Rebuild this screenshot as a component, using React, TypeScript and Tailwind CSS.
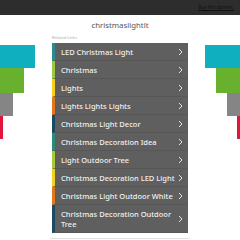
import React from "react";

const items: { label: string; color: string }[] = [
  { label: "LED Christmas Light", color: "#2b8b8f" },
  { label: "Christmas", color: "#9cc83f" },
  { label: "Lights", color: "#f2d01b" },
  { label: "Lights Lights Lights", color: "#e6761c" },
  { label: "Christmas Light Decor", color: "#1b4a66" },
  { label: "Christmas Decoration Idea", color: "#2c8a78" },
  { label: "Light Outdoor Tree", color: "#a9c93b" },
  { label: "Christmas Decoration LED Light", color: "#f2d01b" },
  { label: "Christmas Light Outdoor White", color: "#e6761c" },
  { label: "Christmas Decoration Outdoor Tree", color: "#1b4a66" },
];

function Chevron() {
  return (
    <svg width="5" height="8" viewBox="0 0 5 8" className="shrink-0">
      <polyline points="1,1 4,4 1,7" fill="none" stroke="#e5e5e5" strokeWidth="1" />
    </svg>
  );
}

export default function App() {
  return (
    <div
      className="w-[240px] h-[240px] overflow-hidden bg-white"
      style={{ fontFamily: "'Noto Sans', 'Open Sans', sans-serif" }}
    >
      <div className="h-[15px] bg-[#2d2d2d] flex items-center justify-end pr-[6px]">
        <span className="text-[4.5px] leading-none text-[#111] underline">Buy this domain.</span>
      </div>
      <div className="h-[21px] flex items-center justify-center">
        <span className="text-[7.8px] leading-none text-[#555]">christmaslightlt</span>
      </div>
      <div className="flex justify-between">
        <div className="w-[35px] pt-[9px] flex flex-col items-start">
          <div className="w-[35px] h-[23px] bg-[#10afc0]" />
          <div className="w-[24px] h-[25px] bg-[#67b12e]" />
          <div className="w-[13px] h-[23px] bg-[#858585]" />
          <div className="w-[3px] h-[23px] bg-[#e0143c]" />
        </div>
        <div className="w-[136px] flex flex-col">
          <div className="h-[7px] text-[4px] leading-none text-[#aaa]">Related Links</div>
          <div className="flex flex-col">
            {items.map((it, i) => (
              <div
                key={i}
                className="flex items-center bg-[#5f5f5f] border-b border-[#575757] border-l-[3px] pl-[6px] pr-[5px] pt-[4px] pb-[3px]"
                style={{ borderLeftColor: it.color }}
              >
                <span className="flex-1 text-[#f0f0f0] text-[7.5px] font-medium leading-[10px] pr-[2px]">
                  {it.label}
                </span>
                <Chevron />
              </div>
            ))}
          </div>
          <div className="mt-[5px] border-t border-[#e2e2e2] mx-[-2px]" />
        </div>
        <div className="w-[35px] pt-[9px] flex flex-col items-end">
          <div className="w-[35px] h-[23px] bg-[#10afc0]" />
          <div className="w-[24px] h-[25px] bg-[#67b12e]" />
          <div className="w-[13px] h-[23px] bg-[#858585]" />
          <div className="w-[3px] h-[23px] bg-[#e0143c]" />
        </div>
      </div>
    </div>
  );
}
